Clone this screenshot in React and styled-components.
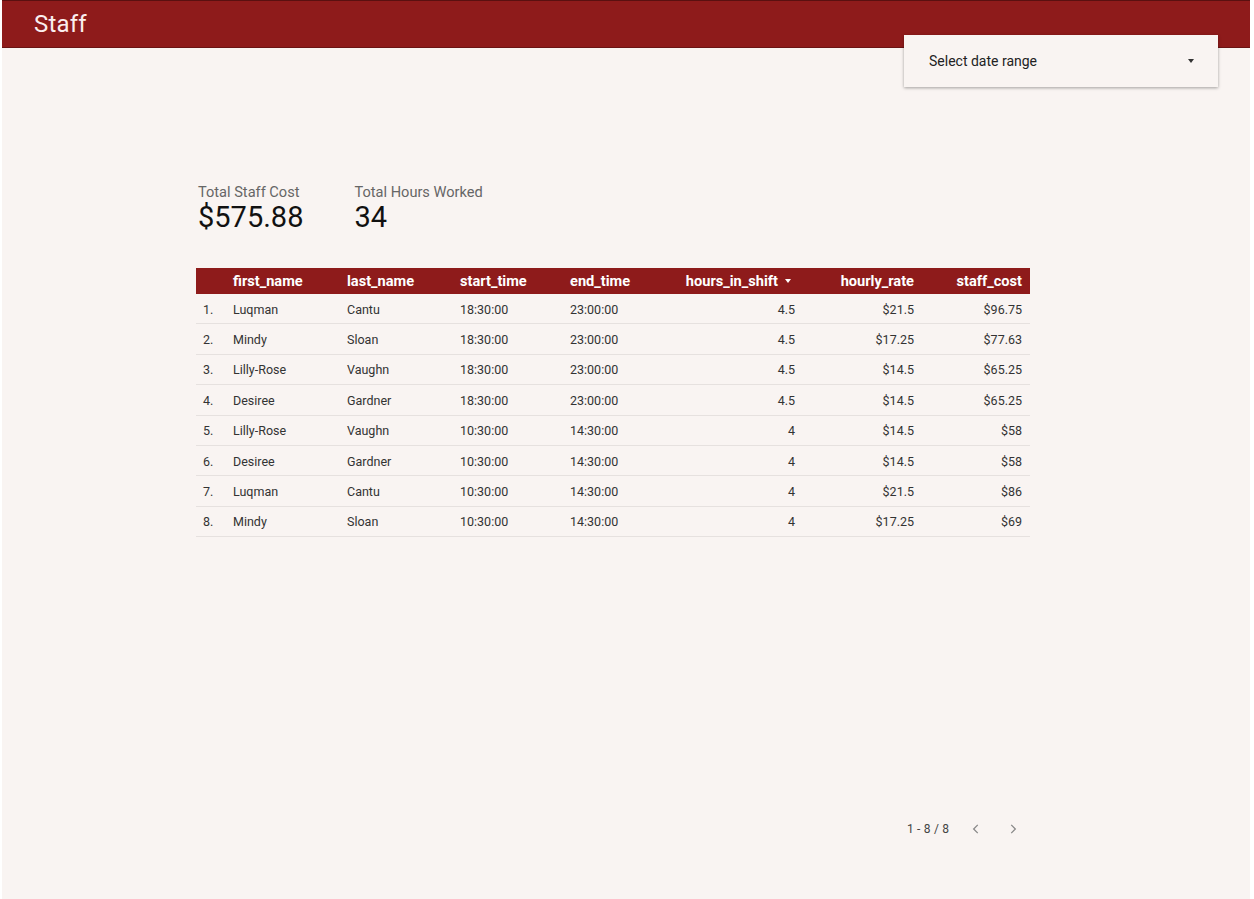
import React from "react";
import styled, { createGlobalStyle } from "styled-components";

const GlobalStyle = createGlobalStyle`
  html, body {
    margin: 0;
    padding: 0;
    background: #ffffff;
    font-family: Roboto, "Liberation Sans", Arial, sans-serif;
  }
`;

const Canvas = styled.div`
  position: relative;
  width: 1248px;
  height: 899px;
  margin-left: 2px;
  background: #f9f4f2;
  display: flex;
  flex-direction: column;
`;

const Header = styled.header`
  height: 46px;
  background: #8e1b1b;
  border-top: 1px solid #5a1010;
  border-bottom: 1px solid #6a1414;
  display: flex;
  align-items: center;
  padding-left: 32px;
`;

const Title = styled.h1`
  margin: 0;
  font-size: 24px;
  font-weight: 400;
  color: #fbeeee;
  letter-spacing: 0.2px;
`;

const DateRange = styled.div`
  position: absolute;
  top: 35px;
  left: 902px;
  width: 314px;
  height: 52px;
  background: #f9f4f2;
  box-shadow: 0 1px 3px rgba(0, 0, 0, 0.35);
  display: flex;
  align-items: center;
  justify-content: space-between;
  padding: 0 24px 0 25px;
  box-sizing: border-box;
  font-size: 14px;
  color: #222;
`;

const Caret = styled.span`
  width: 0;
  height: 0;
  border-left: 3.5px solid transparent;
  border-right: 3.5px solid transparent;
  border-top: 4px solid ${(p) => p.color || "#333"};
  margin-left: ${(p) => p.gap || 0}px;
`;

const Body = styled.main`
  padding: 136px 0 0 194px;
  display: flex;
  flex-direction: column;
`;

const Scores = styled.div`
  display: flex;
  gap: 51px;
  padding-left: 2px;
`;

const Score = styled.div`
  display: flex;
  flex-direction: column;
`;

const ScoreLabel = styled.span`
  font-size: 14.6px;
  color: #666;
  line-height: 16px;
`;

const ScoreValue = styled.span`
  font-size: 29px;
  color: #111;
  line-height: 34px;
`;

const Table = styled.div`
  margin-top: 34px;
  width: 834px;
  display: grid;
  grid-template-columns: 32px 114px 113px 110px 95px 143px 119px 108px;
`;

const HeadCell = styled.div`
  height: 26px;
  background: #8e1b1b;
  color: #fff;
  font-weight: 700;
  font-size: 14.6px;
  display: flex;
  align-items: center;
  justify-content: ${(p) => (p.right ? "flex-end" : "flex-start")};
  padding: ${(p) => (p.sort ? "0 12px 0 0" : p.right ? "0 8px 0 0" : "0 0 0 5px")};
`;

const Cell = styled.div`
  box-sizing: border-box;
  height: 30.4px;
  padding-top: 1px;
  border-bottom: 1px solid #e6e1df;
  font-size: 12.5px;
  color: #333;
  display: flex;
  align-items: center;
  justify-content: ${(p) => (p.right ? "flex-end" : "flex-start")};
  padding-left: ${(p) => (p.right ? 0 : p.index ? 7 : 5)}px;
  padding-right: ${(p) => (p.right ? 8 : 0)}px;
`;

const Pager = styled.div`
  position: absolute;
  left: 905px;
  top: 822px;
  display: flex;
  align-items: center;
  font-size: 12px;
  color: #444;
  letter-spacing: 0.2px;
`;

const PagerButton = styled.span`
  display: flex;
  margin-left: ${(p) => p.gap}px;
`;

const columns = [
  { key: "first_name" },
  { key: "last_name" },
  { key: "start_time" },
  { key: "end_time" },
  { key: "hours_in_shift", right: true, sort: true },
  { key: "hourly_rate", right: true },
  { key: "staff_cost", right: true },
];

const rows = [
  ["Luqman", "Cantu", "18:30:00", "23:00:00", "4.5", "$21.5", "$96.75"],
  ["Mindy", "Sloan", "18:30:00", "23:00:00", "4.5", "$17.25", "$77.63"],
  ["Lilly-Rose", "Vaughn", "18:30:00", "23:00:00", "4.5", "$14.5", "$65.25"],
  ["Desiree", "Gardner", "18:30:00", "23:00:00", "4.5", "$14.5", "$65.25"],
  ["Lilly-Rose", "Vaughn", "10:30:00", "14:30:00", "4", "$14.5", "$58"],
  ["Desiree", "Gardner", "10:30:00", "14:30:00", "4", "$14.5", "$58"],
  ["Luqman", "Cantu", "10:30:00", "14:30:00", "4", "$21.5", "$86"],
  ["Mindy", "Sloan", "10:30:00", "14:30:00", "4", "$17.25", "$69"],
];

const Chevron = ({ dir }) => (
  <svg width="14" height="14" viewBox="0 0 24 24" fill="none" stroke="#888" strokeWidth="2.2">
    <path d={dir === "left" ? "M15 5l-7 7 7 7" : "M9 5l7 7-7 7"} />
  </svg>
);

export default function App() {
  return (
    <Canvas>
      <GlobalStyle />
      <Header>
        <Title>Staff</Title>
      </Header>
      <DateRange>
        <span>Select date range</span>
        <Caret />
      </DateRange>
      <Body>
        <Scores>
          <Score>
            <ScoreLabel>Total Staff Cost</ScoreLabel>
            <ScoreValue>$575.88</ScoreValue>
          </Score>
          <Score>
            <ScoreLabel>Total Hours Worked</ScoreLabel>
            <ScoreValue>34</ScoreValue>
          </Score>
        </Scores>
        <Table>
          <HeadCell />
          {columns.map((c) => (
            <HeadCell key={c.key} right={c.right} sort={c.sort}>
              {c.key}
              {c.sort && <Caret color="#fff" gap={7} />}
            </HeadCell>
          ))}
          {rows.map((r, i) => (
            <React.Fragment key={i}>
              <Cell index>{i + 1}.</Cell>
              {r.map((v, j) => (
                <Cell key={j} right={columns[j].right}>
                  {v}
                </Cell>
              ))}
            </React.Fragment>
          ))}
        </Table>
      </Body>
      <Pager>
        <span>1 - 8 / 8</span>
        <PagerButton gap={20}>
          <Chevron dir="left" />
        </PagerButton>
        <PagerButton gap={23}>
          <Chevron dir="right" />
        </PagerButton>
      </Pager>
    </Canvas>
  );
}
